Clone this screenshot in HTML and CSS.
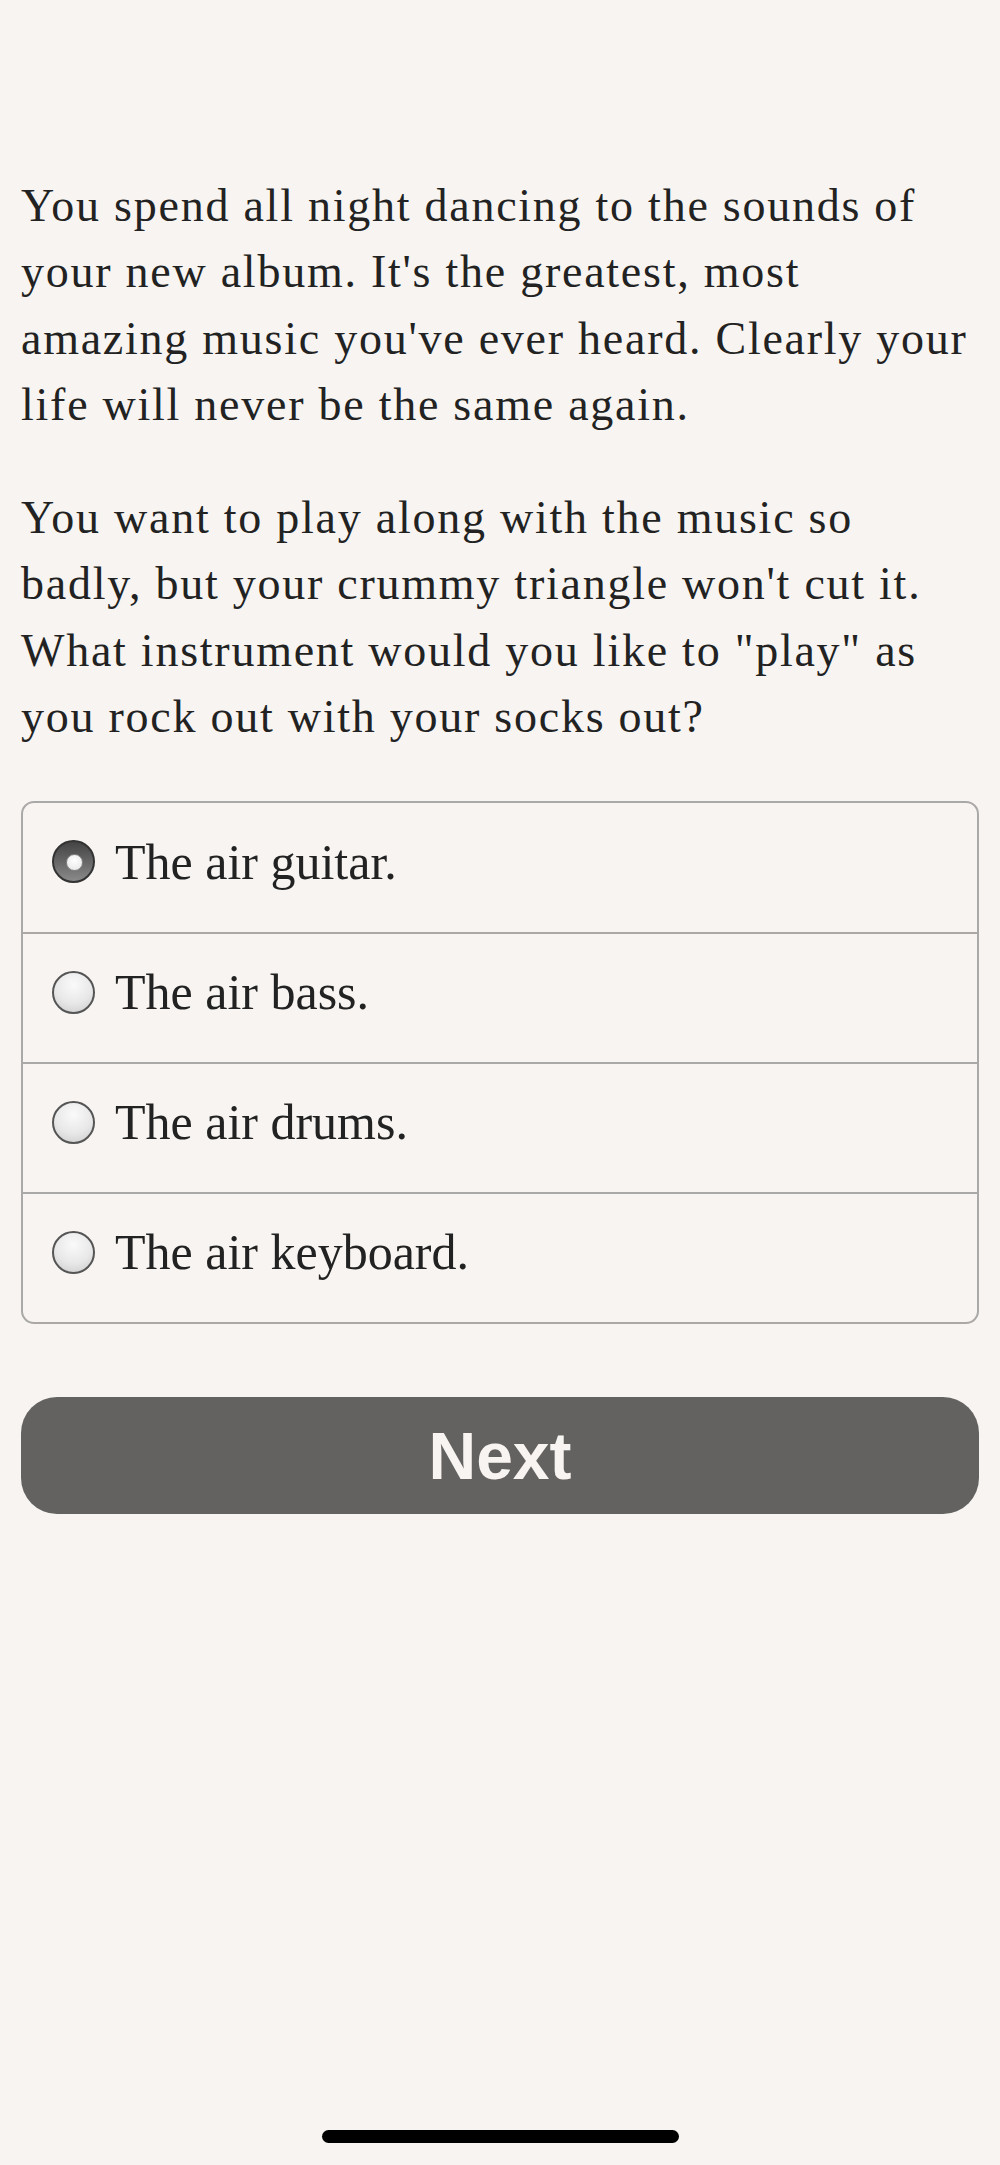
FILE: index.html
```html
<!DOCTYPE html>
<html lang="en">
<head>
<meta charset="utf-8">
<title>Quiz</title>
<link rel="stylesheet" href="styles.css">
</head>
<body>
<main class="page">
  <section class="story">
    <p>You spend all night dancing to the sounds of your new album. It's the greatest, most amazing music you've ever heard. Clearly your life will never be the same again.</p>
    <p>You want to play along with the music so badly, but your crummy triangle won't cut it. What instrument would you like to "play" as you rock out with your socks out?</p>
  </section>
  <form class="choices">
    <label class="choice"><input type="radio" name="inst" checked><span class="dot"></span><span class="label">The air guitar.</span></label>
    <label class="choice"><input type="radio" name="inst"><span class="dot"></span><span class="label">The air bass.</span></label>
    <label class="choice"><input type="radio" name="inst"><span class="dot"></span><span class="label">The air drums.</span></label>
    <label class="choice"><input type="radio" name="inst"><span class="dot"></span><span class="label">The air keyboard.</span></label>
  </form>
  <button class="next" type="button">Next</button>
</main>
<div class="home-bar"></div>
</body>
</html>
```
FILE: styles.css
```css
html, body {
  margin: 0;
  padding: 0;
  background: #f7f4f1;
}
body {
  width: 1000px;
  height: 2165px;
  position: relative;
  font-family: "Liberation Serif", "DejaVu Serif", serif;
  color: #222;
}
.page {
  padding: 173px 21px 0 21px;
}
.story p {
  margin: 0 0 47px 0;
  font-size: 46px;
  letter-spacing: 1.75px;
  line-height: 66.3px;
}
.story p:last-child {
  margin-bottom: 0;
}
.choices {
  margin-top: 51px;
  border: 2px solid #aaa9a8;
  border-radius: 13px;
  display: flex;
  flex-direction: column;
}
.choice {
  display: flex;
  align-items: center;
  gap: 20px;
  height: 130px;
  padding: 0 0 12px 29px;
  box-sizing: border-box;
  border-top: 2px solid #aaa9a8;
  font-size: 50px;
}
.choice:first-child {
  border-top: none;
  height: 129px;
}
.choice input {
  display: none;
}
.dot {
  width: 39px;
  height: 39px;
  border-radius: 50%;
  border: 2px solid #555;
  background: radial-gradient(circle at 50% 30%, #fafafa 0%, #e8e8e8 55%, #c9c9c9 100%);
  flex: none;
  position: relative;
}
.choice input:checked + .dot {
  border-color: #333;
  background: linear-gradient(#444 0%, #666 50%, #8a8a8a 100%);
}
.choice input:checked + .dot::after {
  content: "";
  position: absolute;
  left: 50%;
  top: 50%;
  width: 15px;
  height: 15px;
  margin: -8px 0 0 -8px;
  border-radius: 50%;
  border: 1px solid #888;
  background: radial-gradient(circle at 50% 35%, #fff 0%, #e4e4e4 100%);
}
.next {
  display: block;
  width: 100%;
  height: 117px;
  margin-top: 73px;
  border: none;
  border-radius: 36px;
  background: #636260;
  color: #f7f4f1;
  font-family: "Liberation Sans", Arial, sans-serif;
  font-weight: bold;
  font-size: 66px;
  cursor: pointer;
}
.home-bar {
  position: absolute;
  left: 322px;
  top: 2130px;
  width: 357px;
  height: 13px;
  border-radius: 7px;
  background: #000;
}
```
